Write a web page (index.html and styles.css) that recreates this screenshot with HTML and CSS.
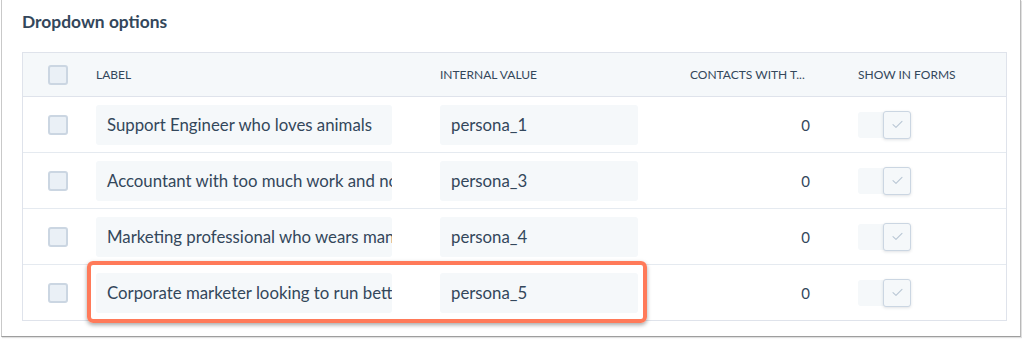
FILE: index.html
```html
<!DOCTYPE html>
<html>
<head>
<meta charset="utf-8">
<link rel="stylesheet" href="styles.css">
</head>
<body>
<div class="frame">
  <h2 class="title">Dropdown options</h2>
  <div class="table">
    <div class="row head">
      <div class="cell c-check"><span class="checkbox"></span></div>
      <div class="cell c-label">LABEL</div>
      <div class="cell c-value">INTERNAL VALUE</div>
      <div class="cell c-count">CONTACTS WITH T...</div>
      <div class="cell c-forms">SHOW IN FORMS</div>
    </div>
    <div class="row">
      <div class="cell c-check"><span class="checkbox"></span></div>
      <div class="cell c-label"><div class="input label-input">Support Engineer who loves animals</div></div>
      <div class="cell c-value"><div class="input value-input">persona_1</div></div>
      <div class="cell c-count num">0</div>
      <div class="cell c-forms"><span class="toggle"><span class="knob"><svg viewBox="0 0 12 10" width="11" height="9"><path d="M1 5.2 L4.3 8.2 L11 1.5" fill="none" stroke="#b8c6d4" stroke-width="1.2" stroke-linecap="round" stroke-linejoin="round"/></svg></span></span></div>
    </div>
    <div class="row">
      <div class="cell c-check"><span class="checkbox"></span></div>
      <div class="cell c-label"><div class="input label-input">Accountant with too much work and no time</div></div>
      <div class="cell c-value"><div class="input value-input">persona_3</div></div>
      <div class="cell c-count num">0</div>
      <div class="cell c-forms"><span class="toggle"><span class="knob"><svg viewBox="0 0 12 10" width="11" height="9"><path d="M1 5.2 L4.3 8.2 L11 1.5" fill="none" stroke="#b8c6d4" stroke-width="1.2" stroke-linecap="round" stroke-linejoin="round"/></svg></span></span></div>
    </div>
    <div class="row">
      <div class="cell c-check"><span class="checkbox"></span></div>
      <div class="cell c-label"><div class="input label-input">Marketing professional who wears many hats</div></div>
      <div class="cell c-value"><div class="input value-input">persona_4</div></div>
      <div class="cell c-count num">0</div>
      <div class="cell c-forms"><span class="toggle"><span class="knob"><svg viewBox="0 0 12 10" width="11" height="9"><path d="M1 5.2 L4.3 8.2 L11 1.5" fill="none" stroke="#b8c6d4" stroke-width="1.2" stroke-linecap="round" stroke-linejoin="round"/></svg></span></span></div>
    </div>
    <div class="row last">
      <div class="highlight"></div>
      <div class="cell c-check"><span class="checkbox"></span></div>
      <div class="cell c-label"><div class="input label-input">Corporate marketer looking to run better campaigns</div></div>
      <div class="cell c-value"><div class="input value-input">persona_5</div></div>
      <div class="cell c-count num">0</div>
      <div class="cell c-forms"><span class="toggle"><span class="knob"><svg viewBox="0 0 12 10" width="11" height="9"><path d="M1 5.2 L4.3 8.2 L11 1.5" fill="none" stroke="#b8c6d4" stroke-width="1.2" stroke-linecap="round" stroke-linejoin="round"/></svg></span></span></div>
    </div>
  </div>
</div>
</body>
</html>
```
FILE: styles.css
```css
html, body {
  margin: 0;
  padding: 0;
  background: #ffffff;
}
body {
  font-family: Lato, "Open Sans", "Liberation Sans", sans-serif;
  color: #33475b;
  width: 1022px;
  height: 339px;
  overflow: hidden;
}
.frame {
  box-sizing: border-box;
  margin-left: 1px;
  width: 1020px;
  height: 337px;
  border: 1px solid #c9c9c9;
  border-top: none;
  border-right-color: #b9b9b9;
  border-bottom-color: #9e9e9e;
  box-shadow: 1px 1px 1px rgba(0,0,0,0.12);
  padding: 12px 12px 0 20px;
}
.title {
  margin: 0 0 20px 0;
  font-size: 17.4px;
  line-height: 20px;
  font-weight: 700;
  color: #33475b;
}
.table {
  width: 985px;
  border: 1px solid #dfe3eb;
  box-sizing: border-box;
}
.row {
  position: relative;
  display: grid;
  grid-template-columns: 73px 344px 250px 168px 1fr;
  height: 55px;
  border-top: 1px solid #e5eaf0;
  align-items: center;
  font-size: 16.8px;
}
.row.head {
  height: 43px;
  border-top: none;
  background: #f5f8fa;
  border-bottom: 1px solid #dfe3eb;
  font-size: 12px;
  color: #33475b;
}
.row.head + .row {
  border-top: none;
}
.cell {
  white-space: nowrap;
}
.c-check {
  padding-left: 25px;
  display: flex;
  align-items: center;
}
.checkbox {
  display: block;
  width: 16px;
  height: 16px;
  border: 2px solid #cbd6e2;
  border-radius: 3px;
  background: #eaf0f6;
}
.c-count {
  padding-right: 48px;
  text-align: right;
}
.head .c-count {
  text-align: left;
  padding-right: 0;
}
.input {
  box-sizing: border-box;
  height: 40px;
  line-height: 40px;
  background: #f5f8fa;
  border-radius: 3px;
  padding-left: 11px;
  overflow: hidden;
  white-space: nowrap;
}
.label-input {
  width: 296px;
}
.value-input {
  width: 198px;
}
.num {
  font-size: 15px;
}
.c-forms {
  display: flex;
  align-items: center;
}
.toggle {
  display: block;
  position: relative;
  width: 27px;
  height: 26px;
  background: #f5f8fa;
  border-radius: 3px;
}
.knob {
  position: absolute;
  left: 25px;
  top: -1px;
  box-sizing: border-box;
  width: 28px;
  height: 28px;
  background: #f5f8fa;
  border: 1px solid #cbd6e2;
  border-radius: 3px;
  box-shadow: 0 1px 3px rgba(45,62,80,0.15);
  display: flex;
  align-items: center;
  justify-content: center;
}
.highlight {
  position: absolute;
  left: 64px;
  top: -4px;
  width: 560px;
  height: 62px;
  box-sizing: border-box;
  border: 4px solid #ff7a59;
  border-radius: 6px;
  box-shadow: 0 2px 4px rgba(0,0,0,0.35);
  pointer-events: none;
  z-index: 2;
}
```
